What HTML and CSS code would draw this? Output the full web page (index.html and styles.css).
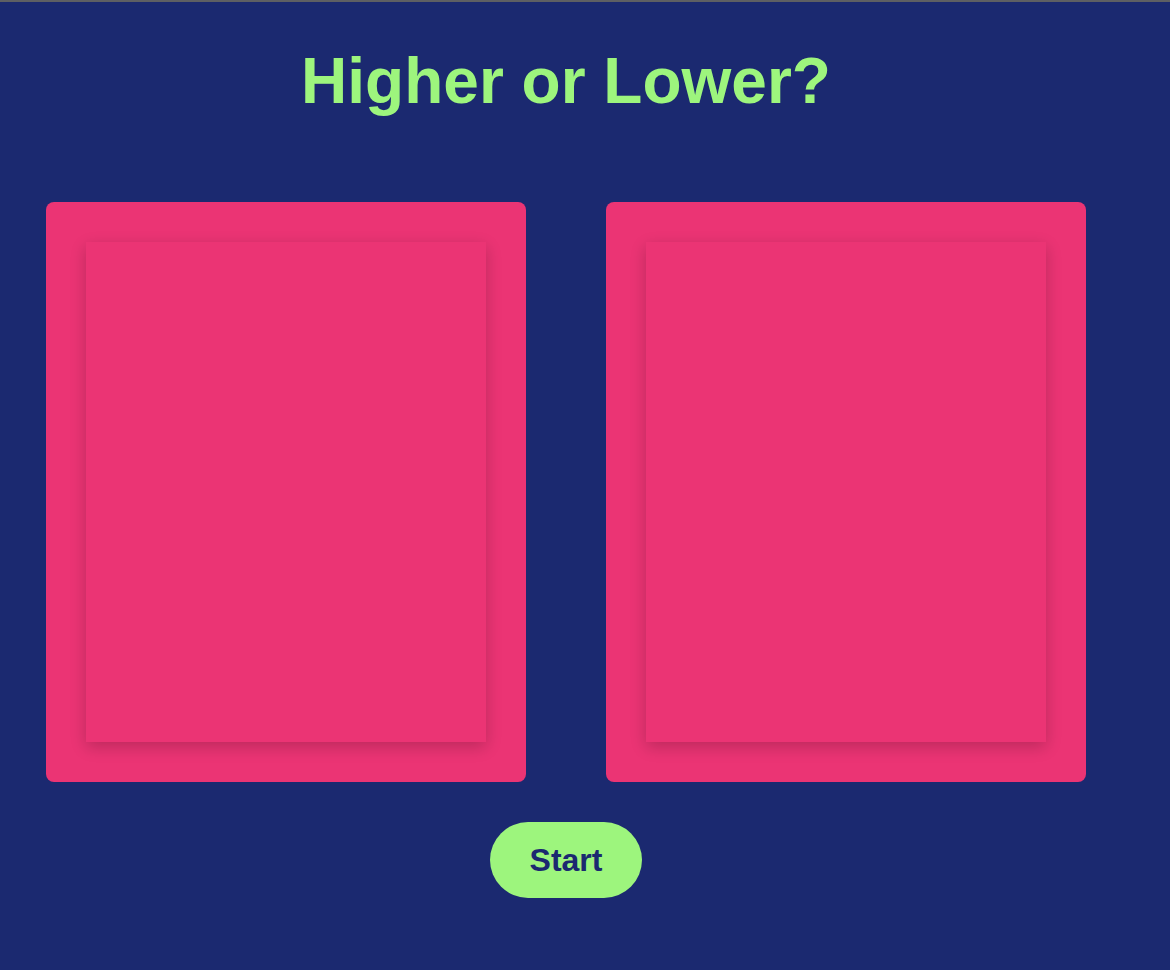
FILE: index.html
```html
<!DOCTYPE html>
<html lang="en">
<head>
<meta charset="utf-8">
<title>Higher or Lower?</title>
<link rel="stylesheet" href="styles.css">
</head>
<body>
<div class="topbar"></div>
<main class="game">
  <h1 class="title">Higher or Lower?</h1>
  <div class="cards">
    <div class="slot"><div class="card"></div></div>
    <div class="slot"><div class="card"></div></div>
  </div>
  <button class="start">Start</button>
</main>
</body>
</html>
```
FILE: styles.css
```css
html, body {
  margin: 0;
  padding: 0;
  background: #1b2970;
  height: 100%;
}
body {
  font-family: "Liberation Sans", Arial, Helvetica, sans-serif;
  overflow: hidden;
}
.topbar {
  height: 2px;
  background: #5e5f63;
}
.game {
  width: 1132px;
  display: flex;
  flex-direction: column;
  align-items: center;
}
.title {
  margin: 42px 0 0;
  font-size: 64px;
  font-weight: 700;
  line-height: 74px;
  color: #9df57d;
}
.cards {
  margin-top: 84px;
  display: flex;
  gap: 80px;
}
.slot {
  width: 480px;
  height: 580px;
  box-sizing: border-box;
  padding: 40px;
  background: #eb3474;
  border-radius: 8px;
}
.card {
  width: 400px;
  height: 500px;
  background: #eb3474;
  box-shadow: 0 5px 15px rgba(0, 0, 0, 0.2);
}
.start {
  margin-top: 40px;
  height: 76px;
  padding: 0 40px;
  border: none;
  border-radius: 38px;
  background: #9df57d;
  color: #1b2970;
  font-family: "Liberation Sans", Arial, Helvetica, sans-serif;
  font-size: 32px;
  font-weight: 700;
  line-height: 76px;
  cursor: pointer;
}
```
